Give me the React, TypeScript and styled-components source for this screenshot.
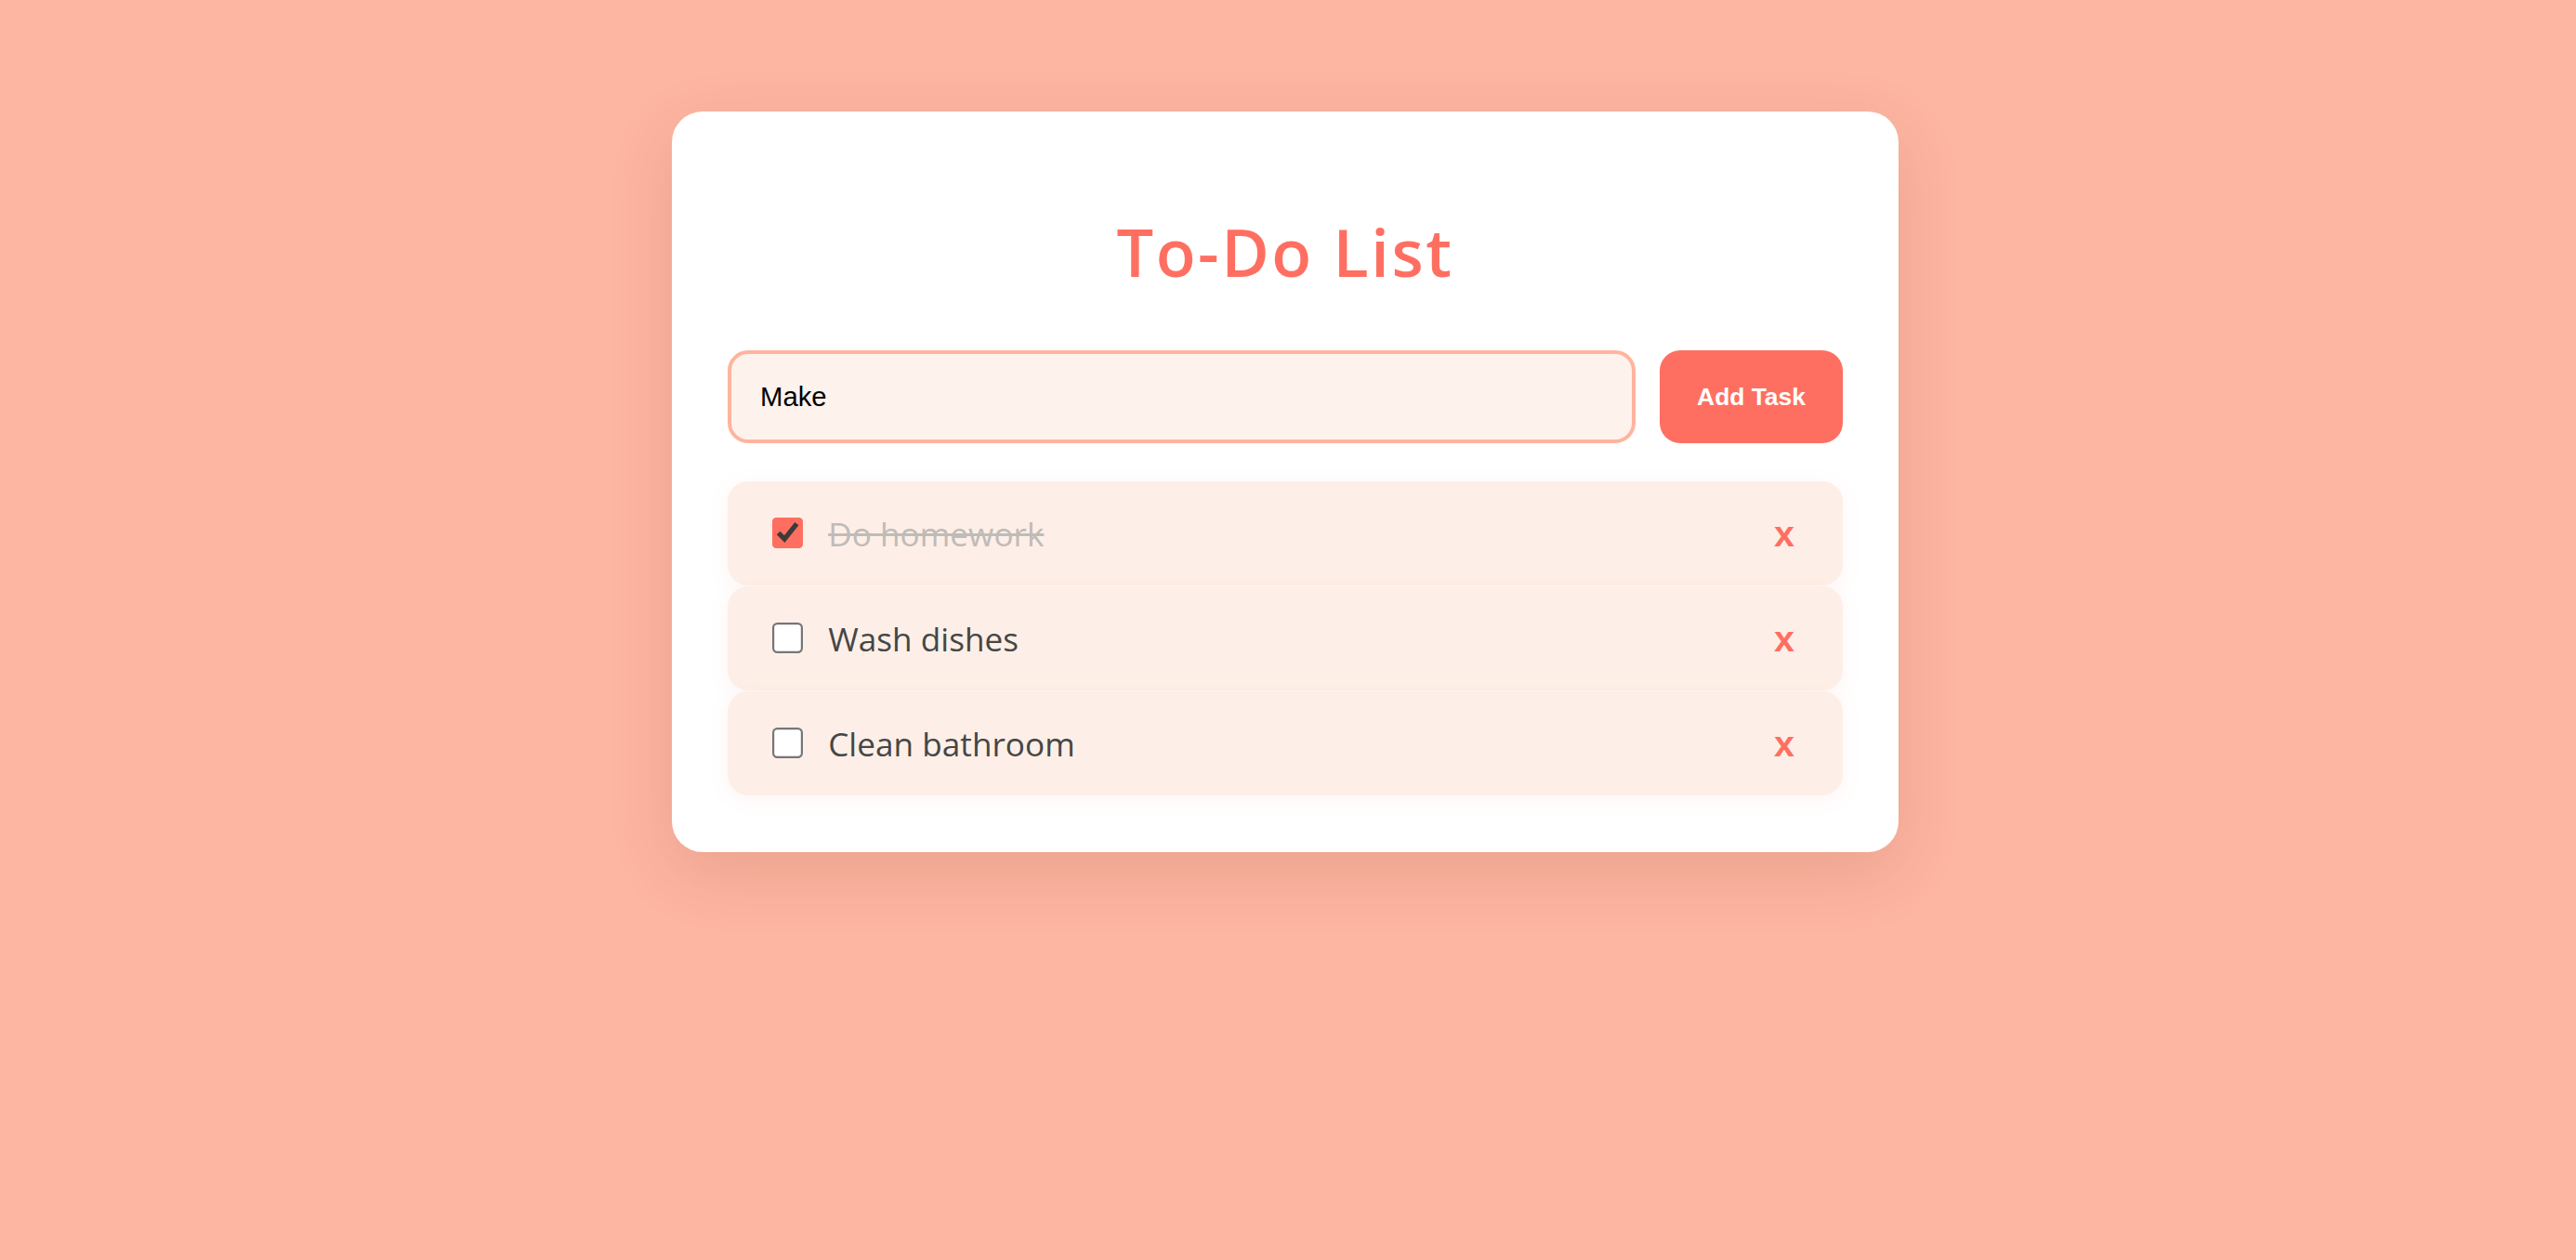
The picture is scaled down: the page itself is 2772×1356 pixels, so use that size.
import React, { useState } from "react";
import styled, { createGlobalStyle } from "styled-components";

const GlobalStyle = createGlobalStyle`
  html, body {
    margin: 0;
    padding: 0;
    background: #fdb6a2;
  }
  * { box-sizing: border-box; }
`;

const Page = styled.div`
  min-height: 100vh;
  display: flex;
  justify-content: center;
  align-items: flex-start;
  padding: 120px 6px 0 0;
  font-family: "Open Sans", "Liberation Sans", sans-serif;
`;

const Card = styled.div`
  width: 1320px;
  background: #ffffff;
  border-radius: 33px;
  padding: 116px 60px 61px;
  box-shadow: 0 22px 70px rgba(120, 40, 20, 0.14);
`;

const Title = styled.h1`
  margin: 0 0 71px;
  text-align: center;
  font-family: "Open Sans", "Liberation Sans", sans-serif;
  font-weight: 600;
  font-size: 70.4px;
  line-height: 70.4px;
  letter-spacing: 2.5px;
  color: #ff6f61;
`;

const InputRow = styled.div`
  display: flex;
  gap: 26px;
  height: 100px;
`;

const TaskInput = styled.input`
  flex: 1;
  height: 100px;
  border: 4px solid #ffb49d;
  border-radius: 22px;
  background: #fef2ed;
  padding: 0 31px;
  font-family: "Liberation Sans", Arial, sans-serif;
  font-size: 29.3px;
  color: #000;
  outline: none;
`;

const AddButton = styled.button`
  width: 197px;
  height: 100px;
  border: none;
  border-radius: 22px;
  background: #ff6f61;
  color: #ffffff;
  font-family: "Liberation Sans", Arial, sans-serif;
  font-weight: 700;
  font-size: 26.4px;
  cursor: pointer;
`;

const List = styled.ul`
  list-style: none;
  margin: 41px 0 0;
  padding: 0;
  display: flex;
  flex-direction: column;
  gap: 1px;
`;

const Item = styled.li`
  display: flex;
  align-items: center;
  height: 112px;
  padding: 0 48px;
  border-radius: 22px;
  background: #fdefe7;
  box-shadow: 0 4px 22px rgba(255, 111, 97, 0.08);
`;

const Check = styled.input`
  zoom: 2.2;
  width: 16px;
  height: 16px;
  margin: 0;
  accent-color: #ff6f61;
  flex-shrink: 0;
`;

const Label = styled.span<{ $done: boolean }>`
  flex: 1;
  margin-left: 25px;
  font-family: "Open Sans", "Liberation Sans", sans-serif;
  font-size: 35.2px;
  color: ${(p) => (p.$done ? "#c0bbb8" : "#464646")};
  text-decoration: ${(p) => (p.$done ? "line-through" : "none")};
`;

const DeleteButton = styled.button`
  border: none;
  background: none;
  padding: 0 4px;
  font-family: "Liberation Sans", Arial, sans-serif;
  font-weight: 700;
  font-size: 39.6px;
  color: #ff6f61;
  cursor: pointer;
`;

type Task = { id: number; text: string; done: boolean };

export default function App() {
  const [tasks, setTasks] = useState<Task[]>([
    { id: 1, text: "Do homework", done: true },
    { id: 2, text: "Wash dishes", done: false },
    { id: 3, text: "Clean bathroom", done: false },
  ]);
  const [value, setValue] = useState("Make");

  const toggle = (id: number) =>
    setTasks((t) => t.map((x) => (x.id === id ? { ...x, done: !x.done } : x)));
  const remove = (id: number) => setTasks((t) => t.filter((x) => x.id !== id));
  const add = () => {
    if (!value.trim()) return;
    setTasks((t) => [...t, { id: Date.now(), text: value, done: false }]);
    setValue("");
  };

  return (
    <>
      <GlobalStyle />
      <Page>
        <Card>
          <Title>To-Do List</Title>
          <InputRow>
            <TaskInput value={value} onChange={(e) => setValue(e.target.value)} />
            <AddButton onClick={add}>Add Task</AddButton>
          </InputRow>
          <List>
            {tasks.map((t) => (
              <Item key={t.id}>
                <Check type="checkbox" checked={t.done} onChange={() => toggle(t.id)} />
                <Label $done={t.done}>{t.text}</Label>
                <DeleteButton onClick={() => remove(t.id)}>x</DeleteButton>
              </Item>
            ))}
          </List>
        </Card>
      </Page>
    </>
  );
}
